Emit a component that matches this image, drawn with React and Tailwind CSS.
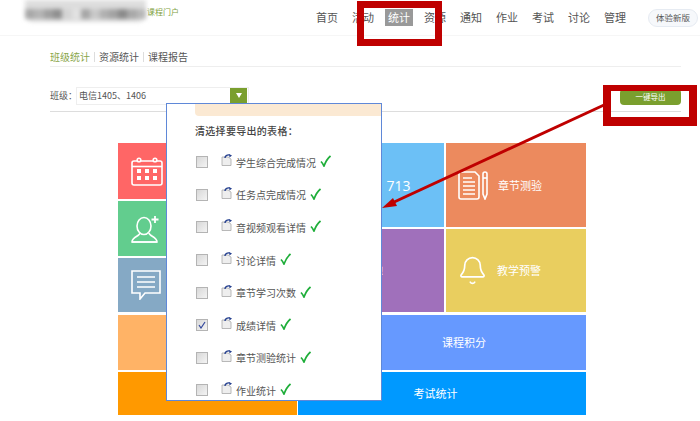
import React from 'react';
import { Bell } from 'lucide-react';

const NAV = ['首页', '活动', '统计', '资源', '通知', '作业', '考试', '讨论', '管理'];

const TABLES = [
  { name: '学生综合完成情况' },
  { name: '任务点完成情况' },
  { name: '音视频观看详情' },
  { name: '讨论详情' },
  { name: '章节学习次数' },
  { name: '成绩详情', checked: true },
  { name: '章节测验统计' },
  { name: '作业统计' },
];

// mosaic over the school logo, darkest along the middle band
const LOGO_BLOCKS = [
  'bg-[#a8a8a8]', 'bg-[#b4b4b4]', 'bg-[#a0a0a0]', 'bg-[#8f8f8f]', 'bg-[#d4d4d4]', 'bg-[#e2e2e2]',
  'bg-[#a6a6a6]', 'bg-[#c8c8c8]', 'bg-[#b0b0b0]', 'bg-[#a2a2a2]', 'bg-[#8a8a8a]', 'bg-[#a8a8a8]', 'bg-[#b8b8b8]',
];

const FONT = "font-['Noto_Sans_CJK_SC','Liberation_Sans',sans-serif]";

function CalendarIcon() {
  return (
    <svg width="32" height="29" viewBox="0 0 32 29" fill="none" stroke="white" strokeWidth="1.6">
      <rect x="1" y="4" width="30" height="24" rx="2" />
      <path d="M1 9.5h30" />
      <circle cx="8" cy="3" r="1.8" fill="#ff6666" />
      <circle cx="24" cy="3" r="1.8" fill="#ff6666" />
      <g fill="white" stroke="none">
        <rect x="6" y="12" width="4" height="4" />
        <rect x="14" y="12" width="4" height="4" />
        <rect x="22" y="12" width="4" height="4" />
        <rect x="6" y="19" width="4" height="4" />
        <rect x="14" y="19" width="4" height="4" />
        <rect x="22" y="19" width="4" height="4" />
      </g>
    </svg>
  );
}

function UserPlusIcon() {
  return (
    <svg width="30" height="28" viewBox="0 0 30 28" fill="none" stroke="white" strokeWidth="1.6">
      <ellipse cx="13" cy="11" rx="7" ry="8.5" />
      <path d="M9 18c0 3-8 4-8 9h25c0-5-8-6-8-9" />
      <path d="M1 27h25" />
      <path d="M24 1v7M20.5 4.5h7" strokeWidth="1.8" />
    </svg>
  );
}

function ChatIcon() {
  return (
    <svg width="30" height="30" viewBox="0 0 30 30" fill="none" stroke="white" strokeWidth="1.6">
      <path d="M1 1h28v22H14l-5 6v-6H1z" />
      <path d="M6 7h18M6 12h18M6 17h18" />
    </svg>
  );
}

function DocPenIcon() {
  return (
    <svg width="30" height="29" viewBox="0 0 30 29" fill="none" stroke="white" strokeWidth="1.6">
      <path d="M1 3q0-2 2-2h14l4 4v21q0 2-2 2H3q-2 0-2-2z" />
      <path d="M5 7h9M5 11h12M5 15h12M5 19h12M5 23h12" />
      <path d="M25 3q0-2 2-2t2 2v20l-2 5-2-5z" />
      <path d="M25 7h4" />
    </svg>
  );
}

function FileIcon() {
  return (
    <svg width="12" height="12" viewBox="0 0 12 12" fill="none">
      <path d="M1 3h6l3 2v6.500H1z" fill="#eeeeee" stroke="#a8a8a8" strokeWidth="0.8" />
      <path d="M4 4c0-2 2-3.500 4.500-3" stroke="#25408f" strokeWidth="1.4" />
      <path d="M8 0l3 1.500L8.500 3.500z" fill="#25408f" />
    </svg>
  );
}

function GreenCheck() {
  return (
    <svg width="11" height="12" viewBox="0 0 11 12" fill="none">
      <path d="M1 6.500c1 1 2 2.500 3 4.500C5.500 7 7.500 3.500 10.500 1" stroke="#1fae3a" strokeWidth="1.700" />
    </svg>
  );
}

function Checkbox({ checked }) {
  return (
    <div className="w-[12px] h-[12px] border border-[#b4b4b4] bg-gradient-to-br from-[#d8d8d8] to-[#f4f4f4] flex items-center justify-center">
      {checked && (
        <svg width="8" height="8" viewBox="0 0 8 8" fill="none">
          <path d="M1 4l2 3 4-6" stroke="#33489c" strokeWidth="1.200" />
        </svg>
      )}
    </div>
  );
}

function ExportPopup() {
  return (
    <div className="absolute left-[166px] top-[103px] w-[216px] h-[298px] bg-white border-[1.5px] border-[#5f88d8] overflow-hidden">
      <div className="ml-[28px] h-[12px] bg-[#fbe9d3] rounded-bl-sm" />
      <div className="ml-[28px] mt-[8px] h-[14px] leading-[14px] text-[10px] text-[#444] font-medium tracking-[0.3px]">
        清选择要导出的表格：
      </div>
      <div className="mt-[8px] pl-[29px]">
        {TABLES.map((t) => (
          <div key={t.name} className="flex items-center h-[32.6px]">
            <Checkbox checked={t.checked} />
            <div className="ml-[13px] -mt-[4px]">
              <FileIcon />
            </div>
            <span className="ml-[3px] text-[10px] text-[#555]">{t.name}</span>
            <div className="ml-[4px] -mt-[2px]">
              <GreenCheck />
            </div>
          </div>
        ))}
      </div>
    </div>
  );
}

function Annotations() {
  return (
    <>
      <div className="absolute left-[357px] top-[1px] w-[85px] h-[45px] border-[7px] border-[#bf0000]" />
      <div className="absolute left-[603px] top-[85px] w-[94px] h-[41px] border-x-[8px] border-t-[6px] border-b-[9px] border-[#bf0000]" />
      <svg className="absolute left-0 top-0" width="700" height="421" fill="none">
        <path d="M604 105L392 203" stroke="#bf0000" strokeWidth="3" />
        <path d="M382 208l11-10 4 8z" fill="#bf0000" />
      </svg>
    </>
  );
}

export default function App() {
  return (
    <div className={`relative w-[700px] h-[421px] bg-white overflow-hidden ${FONT}`}>
      {/* header */}
      <div className="flex items-center h-[36px] border-b border-[#f6f6f6]">
        <div className="ml-[25px] w-[121px] h-[22px] -mt-[14px] flex items-end blur-[2px] rounded-b-lg bg-[#dddddd]">
          {LOGO_BLOCKS.map((c, i) => (
            <div key={i} className={`flex-1 h-[10px] mb-[3px] ${c}`} />
          ))}
        </div>
        <span className="ml-[1px] -mt-[12px] text-[8px] text-[#7f9f3f]">课程门户</span>
        <div className="ml-auto flex items-center">
          {NAV.map((item) => (
            <div key={item} className="w-[36px] flex justify-center">
              <span className={`text-[11px] leading-[17px] px-[3px] text-[#555] ${item === '统计' ? 'bg-[#999] text-white' : ''}`}>
                {item}
              </span>
            </div>
          ))}
          <div className="ml-[15px] mr-[2px] w-[50px] h-[18px] rounded-full border border-[#e6ebf2] bg-[#f6f8fb] flex items-center justify-center text-[8.500px] text-[#555]">
            体验新版
          </div>
        </div>
      </div>

      {/* tabs */}
      <div className="ml-[50px] w-[631px] h-[31px] border-b border-[#eeeeee] flex items-end pb-[2px] text-[10px] text-[#555]">
        <span className="text-[#8aa64a]">班级统计</span>
        <span className="mx-[4px] mb-[2px] w-px h-[10px] bg-[#ddd]" />
        <span>资源统计</span>
        <span className="mx-[4px] mb-[2px] w-px h-[10px] bg-[#ddd]" />
        <span>课程报告</span>
      </div>

      {/* class select */}
      <div className="ml-[50px] w-[631px] h-[45px] border-b border-[#dddddd] flex items-end pb-[6px] text-[9px] text-[#555]">
        <span className="mb-[3px]">班级：</span>
        <div className="ml-[-1px] w-[173px] h-[18px] border border-[#eeeeee] flex items-center justify-between pl-[2px] pr-[1px]">
          <span>电信1405、1406</span>
          <div className="w-[17px] h-[16px] -mt-[1px] bg-[#7a9f2e] flex items-center justify-center">
            <svg width="6" height="5" viewBox="0 0 6 5">
              <path d="M0 0h6L3 5z" fill="white" />
            </svg>
          </div>
        </div>
        <div className="ml-auto w-[61px] h-[16px] bg-[#7a9f2e] rounded-sm text-[7.500px] text-white flex items-center justify-center">
          一键导出
        </div>
      </div>

      {/* tiles */}
      <div className="ml-[118px] mt-[31px] w-[468px] flex flex-col text-white text-[11px]">
        <div className="flex gap-[2.500px] h-[169px]">
          <div className="w-[92px] flex flex-col justify-between">
            <div className="h-[56px] bg-[#ff6666] pl-[13px] flex items-center"><CalendarIcon /></div>
            <div className="h-[55px] bg-[#62cd8e] pl-[13px] flex items-center"><UserPlusIcon /></div>
            <div className="h-[54px] bg-[#85a9c5] pl-[13px] flex items-center"><ChatIcon /></div>
          </div>
          <div className="flex-1 flex flex-col justify-between">
            <div className="h-[84px] bg-[#6cc0f6] flex items-center justify-end pr-[33px] text-[14px] font-['Open_Sans',sans-serif]">713</div>
            <div className="h-[83px] bg-[#a070bb] flex items-center justify-end pr-[60px]">!</div>
          </div>
          <div className="w-[140px] flex flex-col justify-between">
            <div className="h-[84px] bg-[#ec8a5e] pl-[12px] flex items-center gap-[10px]">
              <DocPenIcon />
              <span>章节测验</span>
            </div>
            <div className="h-[83px] bg-[#e9ce5f] pl-[11px] flex items-center gap-[9px]">
              <Bell size={31} strokeWidth={1.300} />
              <span>教学预警</span>
            </div>
          </div>
        </div>
        <div className="flex gap-[2px] h-[55px] mt-[3px]">
          <div className="w-[222px] bg-[#ffb366]" />
          <div className="flex-1 bg-[#6699ff] flex items-center justify-center">课程积分</div>
        </div>
        <div className="flex gap-[1px] h-[43px] mt-[2px]">
          <div className="w-[179px] bg-[#ff9900]" />
          <div className="flex-1 bg-[#0099ff] flex items-center justify-center pr-[13px]">考试统计</div>
        </div>
      </div>

      <ExportPopup />
      <Annotations />
    </div>
  );
}
